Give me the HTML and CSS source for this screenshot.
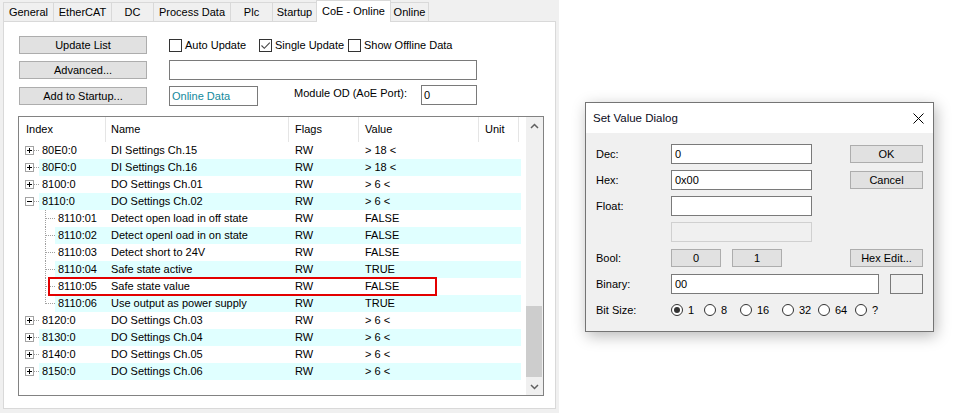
FILE: index.html
```html
<!DOCTYPE html>
<html>
<head>
<meta charset="utf-8">
<title>CoE - Online</title>
<link rel="stylesheet" href="styles.css">
</head>
<body>
<div class="screen">
  <div class="left">
    <div class="tabs">
      <div class="tab">General</div>
      <div class="tab">EtherCAT</div>
      <div class="tab">DC</div>
      <div class="tab">Process Data</div>
      <div class="tab">Plc</div>
      <div class="tab">Startup</div>
      <div class="tab active">CoE - Online</div>
      <div class="tab">Online</div>
    </div>
    <div class="panel">
      <div class="controls">
        <div class="btn">Update List</div>
        <div class="checks">
          <label class="chk"><span class="box"></span>Auto Update</label>
          <label class="chk"><span class="box"><svg width="11" height="11" viewBox="0 0 11 11"><path d="M1.5 5.5l2.8 2.8 5.5-5.6" fill="none" stroke="#444" stroke-width="1.1"/></svg></span>Single Update</label>
          <label class="chk"><span class="box"></span>Show Offline Data</label>
        </div>
        <div class="btn">Advanced...</div>
        <div class="field wide"></div>
        <div class="btn">Add to Startup...</div>
        <div class="row3">
          <div class="field online">Online Data</div>
          <span class="mod-label">Module OD (AoE Port):</span>
          <div class="field port">0</div>
        </div>
      </div>

      <div class="listbox">
        <div class="list">
          <div class="lhead">
            <div>Index</div>
            <div class="h-name">Name</div>
            <div>Flags</div>
            <div>Value</div>
            <div>Unit</div>
          </div>

          <div class="row">
            <svg class="tree" width="20" height="17" viewBox="0 0 20 17"><rect x="6.5" y="4.5" width="8" height="8" fill="#fff" stroke="#a3a3a3"/><path d="M8 8.5h5M10.5 6v5" stroke="#000"/><path d="M15 8.5h5" stroke="#a0a0a0" stroke-dasharray="1 1"/></svg>
            <div class="cells"><span class="c-idx">80E0:0</span><span class="c-name">DI Settings Ch.15</span><span class="c-flags">RW</span><span class="c-val">&gt; 18 &lt;</span><span></span></div>
          </div>
          <div class="row alt">
            <svg class="tree" width="20" height="17" viewBox="0 0 20 17"><rect x="6.5" y="4.5" width="8" height="8" fill="#fff" stroke="#a3a3a3"/><path d="M8 8.5h5M10.5 6v5" stroke="#000"/><path d="M15 8.5h5" stroke="#a0a0a0" stroke-dasharray="1 1"/></svg>
            <div class="cells"><span class="c-idx">80F0:0</span><span class="c-name">DI Settings Ch.16</span><span class="c-flags">RW</span><span class="c-val">&gt; 18 &lt;</span><span></span></div>
          </div>
          <div class="row">
            <svg class="tree" width="20" height="17" viewBox="0 0 20 17"><rect x="6.5" y="4.5" width="8" height="8" fill="#fff" stroke="#a3a3a3"/><path d="M8 8.5h5M10.5 6v5" stroke="#000"/><path d="M15 8.5h5" stroke="#a0a0a0" stroke-dasharray="1 1"/></svg>
            <div class="cells"><span class="c-idx">8100:0</span><span class="c-name">DO Settings Ch.01</span><span class="c-flags">RW</span><span class="c-val">&gt; 6 &lt;</span><span></span></div>
          </div>
          <div class="row alt">
            <svg class="tree" width="20" height="17" viewBox="0 0 20 17"><rect x="6.5" y="4.5" width="8" height="8" fill="#fff" stroke="#a3a3a3"/><path d="M8 8.5h5" stroke="#000"/><path d="M15 8.5h5" stroke="#a0a0a0" stroke-dasharray="1 1"/></svg>
            <div class="cells"><span class="c-idx">8110:0</span><span class="c-name">DO Settings Ch.02</span><span class="c-flags">RW</span><span class="c-val">&gt; 6 &lt;</span><span></span></div>
          </div>
          <div class="row">
            <svg class="tree" width="36" height="17" viewBox="0 0 36 17"><path d="M26.5 0v17M27 8.5h9" stroke="#a0a0a0" stroke-dasharray="1 1"/></svg>
            <div class="cells"><span class="c-idx">8110:01</span><span class="c-name">Detect open load in off state</span><span class="c-flags">RW</span><span class="c-val">FALSE</span><span></span></div>
          </div>
          <div class="row alt">
            <svg class="tree" width="36" height="17" viewBox="0 0 36 17"><path d="M26.5 0v17M27 8.5h9" stroke="#a0a0a0" stroke-dasharray="1 1"/></svg>
            <div class="cells"><span class="c-idx">8110:02</span><span class="c-name">Detect openl oad in on state</span><span class="c-flags">RW</span><span class="c-val">FALSE</span><span></span></div>
          </div>
          <div class="row">
            <svg class="tree" width="36" height="17" viewBox="0 0 36 17"><path d="M26.5 0v17M27 8.5h9" stroke="#a0a0a0" stroke-dasharray="1 1"/></svg>
            <div class="cells"><span class="c-idx">8110:03</span><span class="c-name">Detect short to 24V</span><span class="c-flags">RW</span><span class="c-val">FALSE</span><span></span></div>
          </div>
          <div class="row alt">
            <svg class="tree" width="36" height="17" viewBox="0 0 36 17"><path d="M26.5 0v17M27 8.5h9" stroke="#a0a0a0" stroke-dasharray="1 1"/></svg>
            <div class="cells"><span class="c-idx">8110:04</span><span class="c-name">Safe state active</span><span class="c-flags">RW</span><span class="c-val">TRUE</span><span></span></div>
          </div>
          <div class="row marked">
            <svg class="tree" width="36" height="17" viewBox="0 0 36 17"><path d="M26.5 0v17M27 8.5h9" stroke="#a0a0a0" stroke-dasharray="1 1"/></svg>
            <div class="cells"><span class="c-idx">8110:05</span><span class="c-name">Safe state value</span><span class="c-flags">RW</span><span class="c-val">FALSE</span><span></span></div>
            <div class="hl"></div>
          </div>
          <div class="row alt">
            <svg class="tree" width="36" height="17" viewBox="0 0 36 17"><path d="M26.5 0v9M27 8.5h9" stroke="#a0a0a0" stroke-dasharray="1 1"/></svg>
            <div class="cells"><span class="c-idx">8110:06</span><span class="c-name">Use output as power supply</span><span class="c-flags">RW</span><span class="c-val">TRUE</span><span></span></div>
          </div>
          <div class="row">
            <svg class="tree" width="20" height="17" viewBox="0 0 20 17"><rect x="6.5" y="4.5" width="8" height="8" fill="#fff" stroke="#a3a3a3"/><path d="M8 8.5h5M10.5 6v5" stroke="#000"/><path d="M15 8.5h5" stroke="#a0a0a0" stroke-dasharray="1 1"/></svg>
            <div class="cells"><span class="c-idx">8120:0</span><span class="c-name">DO Settings Ch.03</span><span class="c-flags">RW</span><span class="c-val">&gt; 6 &lt;</span><span></span></div>
          </div>
          <div class="row alt">
            <svg class="tree" width="20" height="17" viewBox="0 0 20 17"><rect x="6.5" y="4.5" width="8" height="8" fill="#fff" stroke="#a3a3a3"/><path d="M8 8.5h5M10.5 6v5" stroke="#000"/><path d="M15 8.5h5" stroke="#a0a0a0" stroke-dasharray="1 1"/></svg>
            <div class="cells"><span class="c-idx">8130:0</span><span class="c-name">DO Settings Ch.04</span><span class="c-flags">RW</span><span class="c-val">&gt; 6 &lt;</span><span></span></div>
          </div>
          <div class="row">
            <svg class="tree" width="20" height="17" viewBox="0 0 20 17"><rect x="6.5" y="4.5" width="8" height="8" fill="#fff" stroke="#a3a3a3"/><path d="M8 8.5h5M10.5 6v5" stroke="#000"/><path d="M15 8.5h5" stroke="#a0a0a0" stroke-dasharray="1 1"/></svg>
            <div class="cells"><span class="c-idx">8140:0</span><span class="c-name">DO Settings Ch.05</span><span class="c-flags">RW</span><span class="c-val">&gt; 6 &lt;</span><span></span></div>
          </div>
          <div class="row alt">
            <svg class="tree" width="20" height="17" viewBox="0 0 20 17"><rect x="6.5" y="4.5" width="8" height="8" fill="#fff" stroke="#a3a3a3"/><path d="M8 8.5h5M10.5 6v5" stroke="#000"/><path d="M15 8.5h5" stroke="#a0a0a0" stroke-dasharray="1 1"/></svg>
            <div class="cells"><span class="c-idx">8150:0</span><span class="c-name">DO Settings Ch.06</span><span class="c-flags">RW</span><span class="c-val">&gt; 6 &lt;</span><span></span></div>
          </div>
        </div>
        <div class="vscroll">
          <div class="sb-btn"><svg width="9" height="6" viewBox="0 0 9 6"><path d="M1 5L4.5 1.5L8 5" fill="none" stroke="#606060" stroke-width="1.5"/></svg></div>
          <div class="sb-track"><div class="sb-thumb"></div></div>
          <div class="sb-btn"><svg width="9" height="6" viewBox="0 0 9 6"><path d="M1 1L4.5 4.5L8 1" fill="none" stroke="#606060" stroke-width="1.5"/></svg></div>
        </div>
      </div>
    </div>
  </div>

  <div class="right">
    <div class="dialog">
      <div class="dlg-title">
        <span>Set Value Dialog</span>
        <svg class="close" width="11" height="11" viewBox="0 0 11 11"><path d="M0.5 0.5L10.5 10.5M10.5 0.5L0.5 10.5" stroke="#000" stroke-width="1"/></svg>
      </div>
      <div class="dlg-body">
        <div class="drow"><span class="dlabel">Dec:</span><div class="dfield">0</div><div class="dbtn">OK</div></div>
        <div class="drow"><span class="dlabel">Hex:</span><div class="dfield">0x00</div><div class="dbtn">Cancel</div></div>
        <div class="drow"><span class="dlabel">Float:</span><div class="dfield"></div></div>
        <div class="drow"><span class="dlabel"></span><div class="dfield disabled"></div></div>
        <div class="drow"><span class="dlabel">Bool:</span><div class="bbtn">0</div><div class="bbtn">1</div><div class="dbtn">Hex Edit...</div></div>
        <div class="drow"><span class="dlabel">Binary:</span><div class="dfield bin">00</div><div class="smallbox"></div></div>
        <div class="drow"><span class="dlabel">Bit Size:</span>
          <div class="radios">
            <span class="radio"><span class="rc on"><span class="dot"></span></span>1</span>
            <span class="radio"><span class="rc"></span>8</span>
            <span class="radio"><span class="rc"></span>16</span>
            <span class="radio"><span class="rc"></span>32</span>
            <span class="radio"><span class="rc"></span>64</span>
            <span class="radio"><span class="rc"></span>?</span>
          </div>
        </div>
      </div>
    </div>
  </div>
</div>
</body>
</html>
```
FILE: styles.css
```css
* { box-sizing: border-box; }
html, body { margin: 0; padding: 0; }
body {
  width: 955px;
  height: 413px;
  overflow: hidden;
  background: #fff;
  font-family: "Liberation Sans", Arial, sans-serif;
  font-size: 11px;
  color: #000;
}
.screen { display: flex; height: 413px; }

/* ---------- left pane ---------- */
.left {
  width: 559px;
  flex: none;
  background: #f0f0f0;
  display: flex;
  flex-direction: column;
}
.tabs {
  display: flex;
  align-items: flex-end;
  height: 21px;
  padding-left: 3px;
  position: relative;
  z-index: 1;
}
.tab {
  height: 19px;
  border: 1px solid #d9d9d9;
  border-bottom: none;
  margin-right: -1px;
  text-align: center;
  line-height: 19px;
  background: #f0f0f0;
  white-space: nowrap;
}
.tab:nth-child(1) { width: 51px; }
.tab:nth-child(2) { width: 59px; }
.tab:nth-child(3) { width: 43px; }
.tab:nth-child(4) { width: 78px; }
.tab:nth-child(5) { width: 43px; }
.tab:nth-child(6) { width: 45px; }
.tab:nth-child(7) { width: 75px; }
.tab:nth-child(8) { width: 39px; }
.tab.active {
  height: 22px;
  margin-bottom: -1px;
  background: #fff;
  line-height: 20px;
  position: relative;
}

.panel {
  margin-left: 3px;
  width: 553px;
  height: 388px;
  background: #fff;
  border: 1px solid #d9d9d9;
  padding: 14px 0 0 14px;
}

.controls {
  display: grid;
  grid-template-columns: 128px 1fr;
  grid-template-rows: 18px 20px 20px;
  column-gap: 22px;
  row-gap: 6px;
  margin-left: 1px;
  align-items: center;
}
.btn {
  height: 18px;
  background: #e1e1e1;
  border: 1px solid #adadad;
  text-align: center;
  line-height: 16px;
  white-space: nowrap;
}
.checks { display: flex; align-items: center; height: 18px; }
.chk { display: flex; align-items: center; gap: 3px; white-space: nowrap; }
.chk:nth-child(1) { width: 90px; }
.chk:nth-child(2) { width: 89px; }
.box {
  width: 13px;
  height: 13px;
  border: 1px solid #333;
  background: #fff;
  display: flex;
  align-items: center;
  justify-content: center;
  flex: none;
}
.box svg { display: block; }

.field {
  height: 20px;
  background: #fff;
  border: 1px solid #7a7a7a;
  line-height: 18px;
  padding-left: 2px;
  white-space: nowrap;
}
.field.wide { width: 308px; }
.row3 { display: flex; align-items: center; height: 20px; }
.field.online { width: 89px; color: #13899c; }
.mod-label { width: 127px; margin-left: 36px; margin-top: -6px; white-space: nowrap; }
.field.port { width: 56px; margin-top: -2px; }

/* ---------- list ---------- */
.listbox {
  margin-top: 10px;
  width: 526px;
  height: 280px;
  border: 1px solid #828282;
  display: flex;
  background: #fff;
}
.list { flex: 1; }
.lhead {
  display: grid;
  grid-template-columns: 86px 183px 70px 120px 41px;
  height: 25px;
}
.lhead > div {
  padding-left: 6px;
  line-height: 25px;
  border-left: 1px solid #e5e5e5;
}
.lhead > div:first-child { border-left: none; padding-left: 7px; }
.lhead > div.h-name { padding-left: 5px; }
.lhead > div:last-child { border-right: 1px solid #e5e5e5; }

.row {
  display: flex;
  height: 17px;
  width: 502px;
  line-height: 17px;
  white-space: nowrap;
}
.row.marked { position: relative; }
.tree { flex: none; display: block; }
.cells {
  flex: 1;
  display: grid;
  grid-template-columns: 1fr 183px 70px 120px 43px;
}
.row.alt .cells { background: #e0ffff; }
.c-idx { padding-left: 3px; }
.c-name { padding-left: 6px; }
.c-flags { padding-left: 7px; }
.c-val { padding-left: 7px; }

.hl {
  position: absolute;
  left: 29px;
  top: -1px;
  width: 389px;
  height: 19px;
  border: 2px solid #e30000;
}

.vscroll {
  width: 17px;
  flex: none;
  background: #f0f0f0;
  display: flex;
  flex-direction: column;
}
.sb-btn {
  height: 17px;
  display: flex;
  align-items: center;
  justify-content: center;
  flex: none;
}
.sb-btn svg { display: block; }
.sb-track { flex: 1; }
.sb-thumb {
  margin: 172px 1px 0 0;
  height: 71px;
  background: #cdcdcd;
}

/* ---------- dialog ---------- */
.right { flex: 1; padding: 102px 0 0 26px; }
.dialog {
  width: 349px;
  height: 230px;
  border: 1px solid #747474;
  background: #f0f0f0;
  box-shadow: 2px 4px 14px rgba(0, 0, 0, 0.28);
  display: flex;
  flex-direction: column;
}
.dlg-title {
  height: 30px;
  flex: none;
  background: #fff;
  display: flex;
  align-items: center;
  justify-content: space-between;
  padding: 0 9px 0 7px;
  font-size: 11.5px;
  color: #0a0a20;
}
.close { display: block; }
.dlg-body {
  flex: 1;
  padding: 11px 10px 0 10px;
  display: flex;
  flex-direction: column;
  gap: 6px;
}
.drow {
  display: flex;
  align-items: center;
  height: 20px;
  white-space: nowrap;
}
.dlabel { width: 75px; flex: none; }
.dfield {
  width: 141px;
  height: 20px;
  background: #fff;
  border: 1px solid #7a7a7a;
  padding-left: 3px;
  line-height: 18px;
}
.dfield.disabled { background: #f0f0f0; border-color: #d0d0d0; }
.dfield.bin { width: 208px; }
.dbtn {
  margin-left: auto;
  width: 73px;
  height: 18px;
  border: 1px solid #adadad;
  background: #e1e1e1;
  text-align: center;
  line-height: 16px;
}
.bbtn {
  width: 50px;
  height: 18px;
  border: 1px solid #adadad;
  background: #e1e1e1;
  text-align: center;
  line-height: 16px;
  margin-right: 11px;
}
.smallbox {
  width: 33px;
  height: 20px;
  margin-left: 11px;
  border: 1px solid #7a7a7a;
  background: #f0f0f0;
}
.radios { display: flex; align-items: center; }
.radio { display: flex; align-items: center; gap: 5px; }
.radio:nth-child(1) { width: 33px; }
.radio:nth-child(2) { width: 36px; }
.radio:nth-child(3) { width: 42px; }
.radio:nth-child(4) { width: 36px; }
.radio:nth-child(5) { width: 37px; }
.rc {
  width: 12px;
  height: 12px;
  border-radius: 50%;
  border: 1px solid #333;
  background: #fff;
  display: flex;
  align-items: center;
  justify-content: center;
  flex: none;
}
.dot { width: 6px; height: 6px; border-radius: 50%; background: #333; }
```
